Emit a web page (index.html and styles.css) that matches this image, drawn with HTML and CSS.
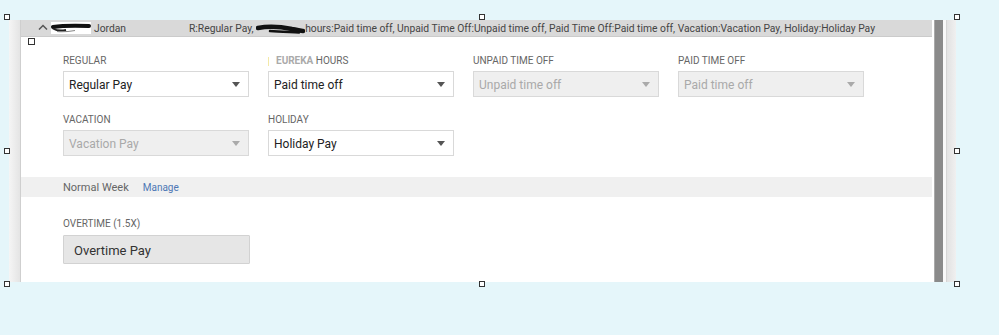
FILE: index.html
```html
<!DOCTYPE html>
<html>
<head>
<meta charset="utf-8">
<link rel="stylesheet" href="styles.css">
</head>
<body>
<div class="stage">
  <div class="frame">
    <div class="strip-left"></div>
    <div class="main">
      <div class="hdr">
        <svg class="chev" width="10" height="6" viewBox="0 0 10 6"><path d="M1 5.5 L5 1.5 L9 5.5" fill="none" stroke="#555" stroke-width="1.5"/></svg>
        <div class="hdr-name">
          <svg class="redact1" width="40" height="12" viewBox="0 0 40 12"><rect x="0" y="0" width="40" height="12" fill="#fff"/><path d="M2 5 C12 3.5 24 3.5 38 4" stroke="#111" stroke-width="4" fill="none" stroke-linecap="round"/><path d="M2 6.5 C6 9 10 9 15 8" stroke="#222" stroke-width="2" fill="none"/><path d="M6 9.5 C12 10 18 9.5 24 8.5" stroke="#888" stroke-width="1.2" fill="none"/></svg>
          <span class="name">Jordan</span>
        </div>
        <div class="hdr-sum">R:Regular Pay, <svg class="redact2" width="49" height="12" viewBox="0 0 49 12"><path d="M2 5 C12 3 26 4 36 6 C42 7 45 8 47 8" stroke="#111" stroke-width="4.5" fill="none" stroke-linecap="round"/><path d="M14 8 C24 9 34 9 43 9.5" stroke="#111" stroke-width="2.5" fill="none" stroke-linecap="round"/></svg>hours:Paid time off, Unpaid Time Off:Unpaid time off, Paid Time Off:Paid time off, Vacation:Vacation Pay, Holiday:Holiday Pay</div>
      </div>
      <div class="grid">
        <div class="field">
          <div class="lbl">REGULAR</div>
          <div class="sel"><span>Regular Pay</span><i class="arrow"></i></div>
        </div>
        <div class="field">
          <div class="lbl"><i class="tick"></i><span class="lbl-faint">EUREKA</span> HOURS</div>
          <div class="sel"><span>Paid time off</span><i class="arrow"></i></div>
        </div>
        <div class="field">
          <div class="lbl">UNPAID TIME OFF</div>
          <div class="sel dis"><span>Unpaid time off</span><i class="arrow"></i></div>
        </div>
        <div class="field">
          <div class="lbl">PAID TIME OFF</div>
          <div class="sel dis"><span>Paid time off</span><i class="arrow"></i></div>
        </div>
        <div class="field">
          <div class="lbl">VACATION</div>
          <div class="sel dis"><span>Vacation Pay</span><i class="arrow"></i></div>
        </div>
        <div class="field">
          <div class="lbl">HOLIDAY</div>
          <div class="sel"><span>Holiday Pay</span><i class="arrow"></i></div>
        </div>
      </div>
      <div class="band"><span class="week">Normal Week</span><a class="manage">Manage</a></div>
      <div class="ot">
        <div class="lbl lbl-ot">OVERTIME (1.5X)</div>
        <div class="ot-box">Overtime Pay</div>
      </div>
    </div>
    <div class="scroll"></div>
    <div class="gap-r"></div>
    <div class="strip-right"></div>
  </div>
  <span class="h" style="left:4px;top:14px"></span>
  <span class="h" style="left:479px;top:14px"></span>
  <span class="h" style="left:954px;top:14px"></span>
  <span class="h" style="left:4px;top:148px"></span>
  <span class="h" style="left:954px;top:148px"></span>
  <span class="h" style="left:4px;top:281px"></span>
  <span class="h" style="left:479px;top:281px"></span>
  <span class="h" style="left:954px;top:281px"></span>
  <span class="h h-in" style="left:28px;top:38px"></span>
</div>
</body>
</html>
```
FILE: styles.css
```css
html, body {
  margin: 0;
  padding: 0;
  background: #e5f6fa;
  font-family: Roboto, "Noto Sans", sans-serif;
}
.stage {
  position: relative;
  width: 999px;
  height: 335px;
  overflow: hidden;
}
.frame {
  display: flex;
  margin: 20px 0 0 9px;
  width: 946px;
  height: 262px;
}
.strip-left {
  flex: 0 0 11px;
  background: linear-gradient(to right, #f5f5f5, #e4e4e4);
  border-right: 1px solid #cfcfcf;
}
.main {
  flex: 0 0 913px;
  background: #fff;
  display: flex;
  flex-direction: column;
}
.hdr {
  height: 17px;
  margin-right: 2px;
  background: #d9d9d9;
  border-bottom: 1px solid #cbcbcb;
  box-sizing: border-box;
  display: flex;
  align-items: center;
  padding-left: 17px;
  font-size: 10.3px;
  color: #444;
  white-space: nowrap;
}
.chev {
  flex: 0 0 10px;
  margin-top: -3px;
}
.hdr-name {
  flex: 0 0 138px;
  margin-left: 3px;
  display: flex;
  align-items: center;
}
.redact1 { display: block; }
.name { margin-left: 3px; }
.hdr-sum {
  display: flex;
  align-items: center;
  white-space: pre;
}
.redact2 { display: block; margin-top: 1px; }
.grid {
  display: grid;
  grid-template-columns: repeat(4, 186px);
  column-gap: 19px;
  row-gap: 16px;
  padding: 17px 0 0 42px;
}
.lbl {
  font-size: 10px;
  line-height: 14px;
  color: #666;
  margin-bottom: 3px;
  display: flex;
  align-items: center;
  white-space: pre;
}
.lbl-ot { margin-bottom: 4px; }
.tick {
  width: 1px;
  height: 9px;
  background: #f3e9a8;
  margin-right: 7px;
}
.lbl-faint { color: #aaa; font-weight: 700; }
.sel {
  height: 26px;
  box-sizing: border-box;
  border: 1px solid #d9d9d9;
  display: flex;
  align-items: center;
  justify-content: space-between;
  padding: 2px 8px 0 5px;
  font-size: 12px;
  color: #222;
  background: #fff;
}
.sel.dis {
  background: #efefef;
  color: #a9a9a9;
}
.arrow {
  width: 0;
  height: 0;
  margin-top: -2px;
  border-left: 4px solid transparent;
  border-right: 4px solid transparent;
  border-top: 5px solid #555;
}
.sel.dis .arrow { border-top-color: #aaa; }
.band {
  margin-top: 21px;
  margin-right: 2px;
  height: 20px;
  background: #f0f0f0;
  display: flex;
  align-items: center;
  padding-left: 42px;
}
.week {
  font-size: 11px;
  color: #666;
}
.manage {
  margin-left: 14px;
  font-size: 10px;
  color: #4e77b5;
}
.ot {
  padding: 20px 0 0 42px;
}
.ot-box {
  width: 187px;
  height: 29px;
  box-sizing: border-box;
  background: #e6e6e6;
  border: 1px solid #d2d2d2;
  border-radius: 1px;
  display: flex;
  align-items: center;
  padding: 1px 0 0 10px;
  font-size: 13px;
  color: #333;
}
.scroll {
  flex: 0 0 8px;
  background: #8a8a8a;
  border-left: 1px solid #aaa;
}
.gap-r {
  flex: 0 0 3px;
  background: #f8f8f8;
}
.strip-right {
  flex: 0 0 10px;
  background: linear-gradient(to right, #e2e2e2, #f0f0f0);
  border-left: 1px solid #d5d5d5;
  box-sizing: border-box;
}
.h {
  position: absolute;
  width: 6px;
  height: 6px;
  box-sizing: border-box;
  border: 1px solid #333;
  background: #fff;
}
.h-in {
  width: 7px;
  height: 7px;
}
```
